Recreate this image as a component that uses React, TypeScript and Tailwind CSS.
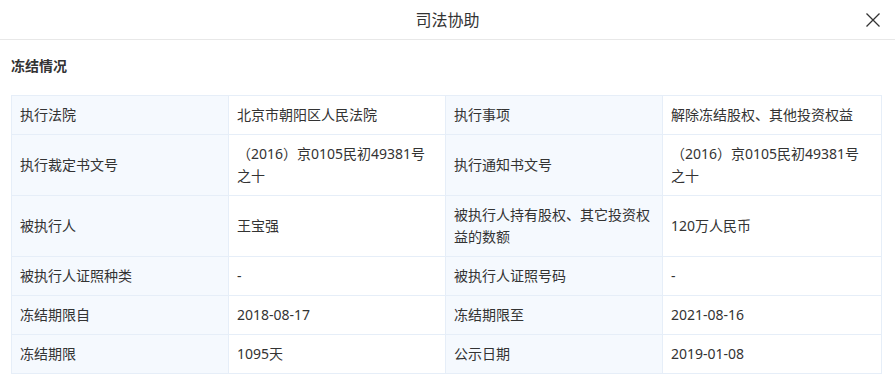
import React from 'react';

const rows: [string, string, string, string][] = [
  ['执行法院', '北京市朝阳区人民法院', '执行事项', '解除冻结股权、其他投资权益'],
  ['执行裁定书文号', '（2016）京0105民初49381号之十', '执行通知书文号', '（2016）京0105民初49381号之十'],
  ['被执行人', '王宝强', '被执行人持有股权、其它投资权益的数额', '120万人民币'],
  ['被执行人证照种类', '-', '被执行人证照号码', '-'],
  ['冻结期限自', '2018-08-17', '冻结期限至', '2021-08-16'],
  ['冻结期限', '1095天', '公示日期', '2019-01-08'],
];

const App = () => {
  return (
    <div
      className="w-[895px] h-[387px] bg-white text-[#333] overflow-hidden"
      style={{ fontFamily: '"Noto Sans", "Noto Sans CJK SC", sans-serif' }}
    >
      {/* Header */}
      <div className="relative h-10 border-b border-[#e8e8e8] flex items-center justify-center">
        <span className="text-[16px]">司法协助</span>
        <button className="absolute left-[865px] top-[12px] text-[#333]">
          <svg width="16" height="16" viewBox="0 0 16 16" fill="none" stroke="currentColor" strokeWidth="1.3">
            <path d="M1.5 1.5 L14.5 14.5 M14.5 1.5 L1.5 14.5" />
          </svg>
        </button>
      </div>

      <div className="px-[11px] pt-[15px]">
        <h3 className="text-[14px] font-bold leading-[22px]">冻结情况</h3>

        <table className="mt-[18px] w-[870px] table-fixed border-collapse text-[14px] leading-[22px]">
          <colgroup>
            <col className="w-[217px]" />
            <col className="w-[217px]" />
            <col className="w-[217px]" />
            <col className="w-[219px]" />
          </colgroup>
          <tbody>
            {rows.map((r, i) => (
              <tr key={i}>
                <td className="border border-[#e6eef8] bg-[#f5f9fe] px-2 py-2 align-middle">{r[0]}</td>
                <td className="border border-[#e6eef8] px-2 py-2 align-middle">{r[1]}</td>
                <td className="border border-[#e6eef8] bg-[#f5f9fe] px-2 py-2 align-middle">{r[2]}</td>
                <td className="border border-[#e6eef8] px-2 py-2 align-middle">{r[3]}</td>
              </tr>
            ))}
          </tbody>
        </table>
      </div>
    </div>
  );
};

export default App;
